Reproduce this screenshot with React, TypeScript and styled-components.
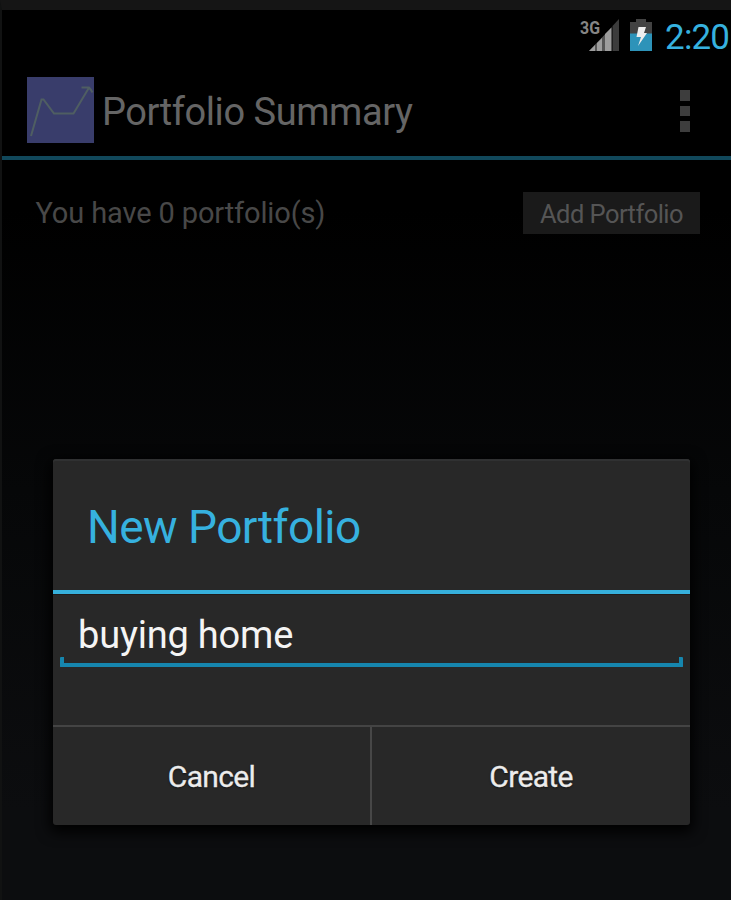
import React from "react";
import styled, { createGlobalStyle } from "styled-components";

const GlobalStyle = createGlobalStyle`
  * { box-sizing: border-box; }
  html, body { margin: 0; background: #000; }
  body { font-family: Roboto, "Liberation Sans", sans-serif; overflow: hidden; }
  button { font-family: inherit; border: 0; margin: 0; padding: 0; }
`;

const Text = styled.span<{ $size: number; $spacing?: number; $color: string }>`
  font-size: ${(p) => p.$size}px;
  letter-spacing: ${(p) => p.$spacing ?? 0}px;
  color: ${(p) => p.$color};
  line-height: 1;
  white-space: pre;
`;

const Screen = styled.div`
  position: relative;
  width: 731px;
  height: 900px;
  display: flex;
  flex-direction: column;
  border-top: 10px solid #151515;
  border-left: 2px solid #111212;
  background: linear-gradient(#000 0, #000 200px, #060708 480px, #0c0d0f 800px, #0c0d0f 100%);
  overflow: hidden;
`;

const StatusBar = styled.div`
  height: 53px;
  flex: none;
  display: flex;
  justify-content: flex-end;
  padding: 9px 2px 0 0;
`;

const SignalIcon = styled.svg`
  width: 40px;
  height: 34px;
  margin-right: 10px;
  overflow: visible;
`;

const BatteryIcon = styled.svg`
  width: 22px;
  height: 34px;
  margin-right: 13px;
`;

const Clock = styled.div`
  padding-top: 1px;
`;

const ActionBar = styled.header`
  height: 97px;
  flex: none;
  display: flex;
  align-items: flex-start;
  padding: 14px 41px 0 25px;
  border-bottom: 4px solid #11485b;
`;

const AppIcon = styled.svg`
  width: 67px;
  height: 66px;
  margin-right: 8px;
`;

const AppTitle = styled.h1`
  flex: 1;
  margin: 0;
  padding-top: 16px;
  font-weight: 400;
  line-height: 1;
  font-size: 38px;
`;

const Overflow = styled.button`
  display: grid;
  gap: 5px;
  margin-top: 13px;
  background: none;
`;

const OverflowDot = styled.i`
  width: 10px;
  height: 10.5px;
  background: #3d3d3d;
`;

const SummaryRow = styled.section`
  display: flex;
  align-items: center;
  justify-content: space-between;
  height: 42px;
  margin: 32px 31px 0 33.5px;
`;

const AddButton = styled.button`
  width: 177px;
  height: 42px;
  display: flex;
  align-items: center;
  justify-content: center;
  padding-top: 4px;
  background: #1a1a1a;
`;

const Dialog = styled.div`
  position: absolute;
  left: 51px;
  top: 449px;
  width: 637px;
  height: 366px;
  display: flex;
  flex-direction: column;
  border-radius: 3px;
  background: #282828;
  box-shadow: inset 0 2px 0 #303132, 0 4px 14px 3px #000;
`;

const DialogTitle = styled.h2`
  height: 135px;
  margin: 0;
  padding: 5px 0 0 34px;
  display: flex;
  align-items: center;
  font-weight: 400;
  border-bottom: 4px solid #36b0dc;
`;

const DialogBody = styled.div`
  height: 131px;
  padding: 0 7px;
  box-shadow: inset 0 1px 0 #201c1b;
`;

const Field = styled.div`
  height: 73px;
  display: flex;
  flex-direction: column;
  justify-content: flex-end;
`;

const FieldText = styled.div`
  height: 42px;
  padding-left: 18px;
`;

const FieldBracket = styled.div`
  height: 10px;
  margin-top: -1px;
  border: 4px solid #1686ae;
  border-top: 0;
  border-radius: 1px;
`;

const DialogActions = styled.div`
  flex: 1;
  display: flex;
  border-top: 2px solid #444;
`;

const ActionButton = styled.button<{ $divided?: boolean }>`
  width: ${(p) => (p.$divided ? 319 : 318)}px;
  display: flex;
  align-items: center;
  justify-content: center;
  padding-top: 2px;
  background: none;
  border-right: ${(p) => (p.$divided ? "2px solid #474747" : "0")};
  text-shadow: 0 1px 2px #111;
  -webkit-text-stroke: 0.3px #ececec;
`;

export default function App() {
  return (
    <>
      <GlobalStyle />
      <Screen>
        <StatusBar>
          <SignalIcon viewBox="0 0 40 34">
            <text x="0" y="14.500" fontSize="18" fontWeight="700" fill="#858585" textLength="20" lengthAdjust="spacingAndGlyphs">3G</text>
            <path d="M9 32 32 8V32Z" fill="#555" />
            <path d="M9 32l6-6v6ZM17 32V24l5-5v13ZM25 32V15l6-6v23Z" fill="#9d9d9d" />
            <path d="M32.500 32V7L39 0V32Z" fill="#3c3c3c" />
          </SignalIcon>
          <BatteryIcon viewBox="0 0 22 34">
            <path d="M0 15V3h6V0h10v3h6v12Z" fill="#424242" />
            <path d="M0 14.500h22V32H0Z" fill="#2d93b9" />
            <path d="M8.500 8h7.500l-2 6h3L8 27l3-9H6.500Z" fill="#eee" />
          </BatteryIcon>
          <Clock><Text $size={35} $spacing={-0.9} $color="#36b1df">2:20</Text></Clock>
        </StatusBar>

        <ActionBar>
          <AppIcon viewBox="0 0 67 66">
            <path d="M0 0h67v66H0Z" fill="#393d6b" />
            <path d="M4 59 14.500 22.500h2L27 36.500h19.500L61.500 11.500M54.500 10.500h7.500q2 2 3.500 5" fill="none" stroke="#4f5e62" strokeWidth="2" />
          </AppIcon>
          <AppTitle><Text $size={38} $spacing={-0.45} $color="#656565">Portfolio Summary</Text></AppTitle>
          <Overflow aria-label="More options">
            <OverflowDot />
            <OverflowDot />
            <OverflowDot />
          </Overflow>
        </ActionBar>

        <SummaryRow>
          <Text $size={29} $spacing={-0.13} $color="#484848">You have 0 portfolio(s)</Text>
          <AddButton><Text $size={25.5} $spacing={-0.55} $color="#555">Add Portfolio</Text></AddButton>
        </SummaryRow>

        <Dialog role="dialog">
          <DialogTitle><Text $size={46} $spacing={-0.55} $color="#36b1df">New Portfolio</Text></DialogTitle>
          <DialogBody>
            <Field>
              <FieldText><Text $size={38} $spacing={-0.2} $color="#f4f4f4">buying home</Text></FieldText>
              <FieldBracket />
            </Field>
          </DialogBody>
          <DialogActions>
            <ActionButton $divided><Text $size={30} $spacing={-0.65} $color="#ececec">Cancel</Text></ActionButton>
            <ActionButton><Text $size={30} $spacing={-0.65} $color="#ececec">Create</Text></ActionButton>
          </DialogActions>
        </Dialog>
      </Screen>
    </>
  );
}
